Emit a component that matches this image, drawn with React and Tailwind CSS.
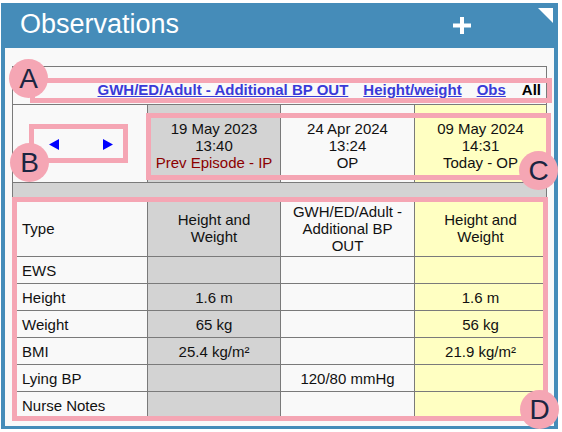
const rows = [
  { label: 'EWS', a: '', b: '', c: '' },
  { label: 'Height', a: '1.6 m', b: '', c: '1.6 m' },
  { label: 'Weight', a: '65 kg', b: '', c: '56 kg' },
  { label: 'BMI', a: '25.4 kg/m²', b: '', c: '21.9 kg/m²' },
  { label: 'Lying BP', a: '', b: '120/80 mmHg', c: '' },
  { label: 'Nurse Notes', a: '', b: '', c: '' },
];

const cell = 'border border-[#7a7a7a]';

const Callout = ({ letter, className }) => (
  <div
    className={`absolute flex h-[39px] w-[39px] items-center justify-center rounded-full bg-[#f5a6b4] text-[28px] leading-none text-[#1c2541] ${className}`}
  >
    {letter}
  </div>
);

const Triangle = ({ dir }) => (
  <svg width="10" height="11" viewBox="0 0 10 11">
    {dir === 'left' ? <polygon points="10,0 10,11 0,5.5" fill="#0000ff" /> : <polygon points="0,0 0,11 10,5.5" fill="#0000ff" />}
  </svg>
);

export default function App() {
  return (
    <div className="relative h-[432px] w-[562px] overflow-hidden bg-white font-['Liberation_Sans',Arial,sans-serif]">
      <div className="ml-[1px] mt-[3px] flex h-[426px] w-[557px] flex-col bg-[#458cb9]">
        {/* header */}
        <div className="flex h-[45px] shrink-0 items-start pr-[5px]">
          <h1 className="ml-[19px] mt-[8px] text-[27px] leading-[27px] text-white">Observations</h1>
          <div className="flex-1" />
          <svg className="mt-[14px]" width="18" height="17" viewBox="0 0 18 17">
            <rect x="7" y="0" width="4" height="17" fill="#fff" />
            <rect x="0" y="6.5" width="18" height="4" fill="#fff" />
          </svg>
          <svg className="ml-[67px] mt-[5px]" width="15" height="15" viewBox="0 0 15 15">
            <polygon points="0,0 15,0 15,15" fill="#fff" />
          </svg>
        </div>

        {/* panel */}
        <div className="mx-[4px] mb-[3px] flex-1 bg-[#f9f9f9] pl-[7px] pt-[18px]">
          <table className="w-[534px] table-fixed border-collapse text-[15px] leading-[17px] text-[#111]">
            <colgroup>
              <col className="w-[135px]" />
              <col className="w-[133px]" />
              <col className="w-[134px]" />
              <col className="w-[132px]" />
            </colgroup>
            <tbody>
              <tr className="h-[38px]">
                <td colSpan={4} className={`${cell} pb-[6px] pr-[5px] text-right align-bottom font-bold`}>
                  <span className="text-[#3a3ad8] underline underline-offset-1">GWH/ED/Adult - Additional BP OUT</span>
                  <span className="ml-[15px] text-[#3a3ad8] underline underline-offset-1">Height/weight</span>
                  <span className="ml-[15px] text-[#3a3ad8] underline underline-offset-1">Obs</span>
                  <span className="ml-[16px] text-black">All</span>
                </td>
              </tr>
              <tr className="h-[78px]">
                <td className={`${cell} align-middle`}>
                  <div className="flex items-center pl-[36px] pt-[2px]">
                    <Triangle dir="left" />
                    <div className="w-[44px]" />
                    <Triangle dir="right" />
                  </div>
                </td>
                <td className={`${cell} bg-[#d3d3d3] pt-[4px] text-center`}>
                  <div>19 May 2023</div>
                  <div>13:40</div>
                  <div className="text-[#8b0000]">Prev Episode - IP</div>
                </td>
                <td className={`${cell} pt-[4px] text-center`}>
                  <div>24 Apr 2024</div>
                  <div>13:24</div>
                  <div>OP</div>
                </td>
                <td className={`${cell} bg-[#ffffc2] pt-[4px] text-center`}>
                  <div>09 May 2024</div>
                  <div>14:31</div>
                  <div>Today - OP</div>
                </td>
              </tr>
              <tr className="h-[17px]">
                <td colSpan={4} className={`${cell} bg-[#d3d3d3]`} />
              </tr>
              <tr className="h-[57px]">
                <td className={`${cell} pl-[9px] align-middle`}>Type</td>
                <td className={`${cell} bg-[#d3d3d3] text-center`}>
                  Height and
                  <br />
                  Weight
                </td>
                <td className={`${cell} text-center`}>
                  GWH/ED/Adult -
                  <br />
                  Additional BP
                  <br />
                  OUT
                </td>
                <td className={`${cell} bg-[#ffffc2] text-center`}>
                  Height and
                  <br />
                  Weight
                </td>
              </tr>
              {rows.map((r) => (
                <tr key={r.label} className="h-[27px]">
                  <td className={`${cell} pl-[9px]`}>{r.label}</td>
                  <td className={`${cell} bg-[#d3d3d3] text-center`}>{r.a}</td>
                  <td className={`${cell} text-center`}>{r.b}</td>
                  <td className={`${cell} bg-[#ffffc2] text-center`}>{r.c}</td>
                </tr>
              ))}
            </tbody>
          </table>
        </div>
      </div>

      {/* annotation boxes */}
      <div className="absolute left-[30px] top-[78px] h-[25px] w-[522px] border-[5px] border-[#f5a6b4]" />
      <div className="absolute left-[29px] top-[124px] h-[39px] w-[99px] border-[5px] border-[#f5a6b4]" />
      <div className="absolute left-[146px] top-[113px] h-[67px] w-[405px] border-[5px] border-[#f5a6b4]" />
      <div className="absolute left-[12px] top-[197px] h-[224px] w-[536px] border-[5px] border-[#f5a6b4]" />

      <Callout letter="A" className="left-[9px] top-[59px]" />
      <Callout letter="B" className="left-[10px] top-[143px]" />
      <Callout letter="C" className="left-[519px] top-[151px]" />
      <Callout letter="D" className="left-[520px] top-[390px]" />
    </div>
  );
}
